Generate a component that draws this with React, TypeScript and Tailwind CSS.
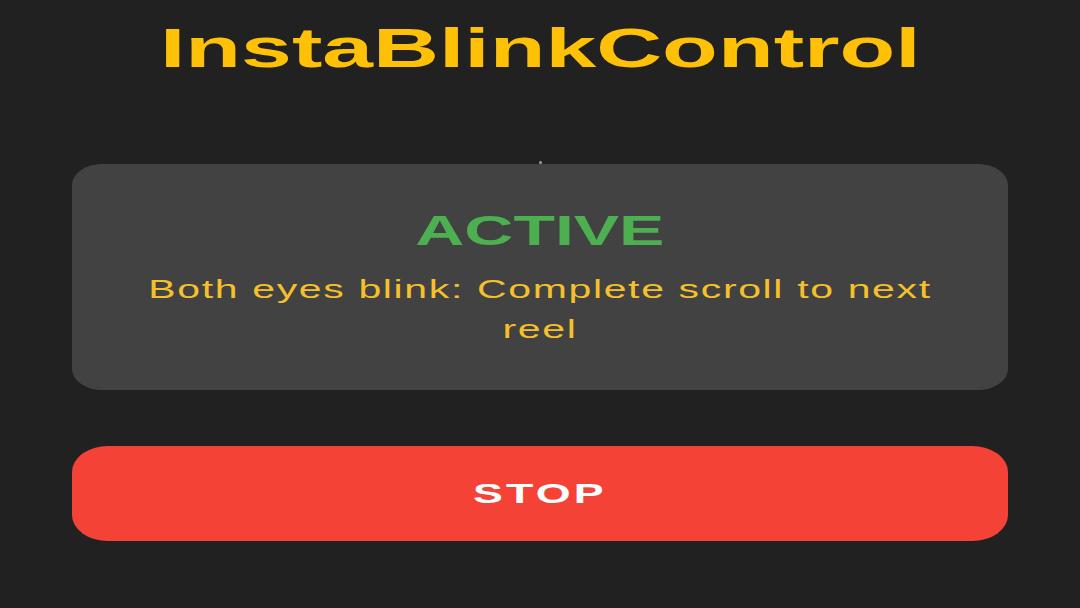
import React from 'react';

export default function App() {
	return (
		<div className="min-h-screen w-full overflow-hidden bg-[#212121] pt-[20px] font-['Liberation_Sans',Arial,sans-serif]">
			<div className="text-center">
				<h1 className="inline-block scale-x-[1.63] text-[56px] font-bold leading-[56px] text-[#ffc107]">
					InstaBlinkControl
				</h1>
			</div>

			<div className="mx-auto mt-[85px] h-[3px] w-[3px] rounded-full bg-[#9e9e9e]" />

			<div className="mx-[72px] rounded-[30px/21px] bg-[#424242] pb-[41px] pt-[45px]">
				<div className="text-center">
					<span className="inline-block scale-x-[1.58] text-[43px] font-bold leading-[43px] text-[#4caf50]">
						ACTIVE
					</span>
				</div>
				<p className="mx-auto mt-[17px] w-[500px] scale-x-[1.64] text-center text-[25px] leading-[40px] tracking-[1px] text-[#f5c02c]">
					Both eyes blink: Complete scroll to next reel
				</p>
			</div>

			<button
				type="button"
				className="mx-[72px] mt-[56px] flex h-[95px] w-[calc(100%-144px)] items-center justify-center rounded-[36px/26px] bg-[#f44336]"
			>
				<span className="inline-block scale-x-[1.6] text-[28px] font-bold tracking-[2px] text-white">STOP</span>
			</button>
		</div>
	);
}
